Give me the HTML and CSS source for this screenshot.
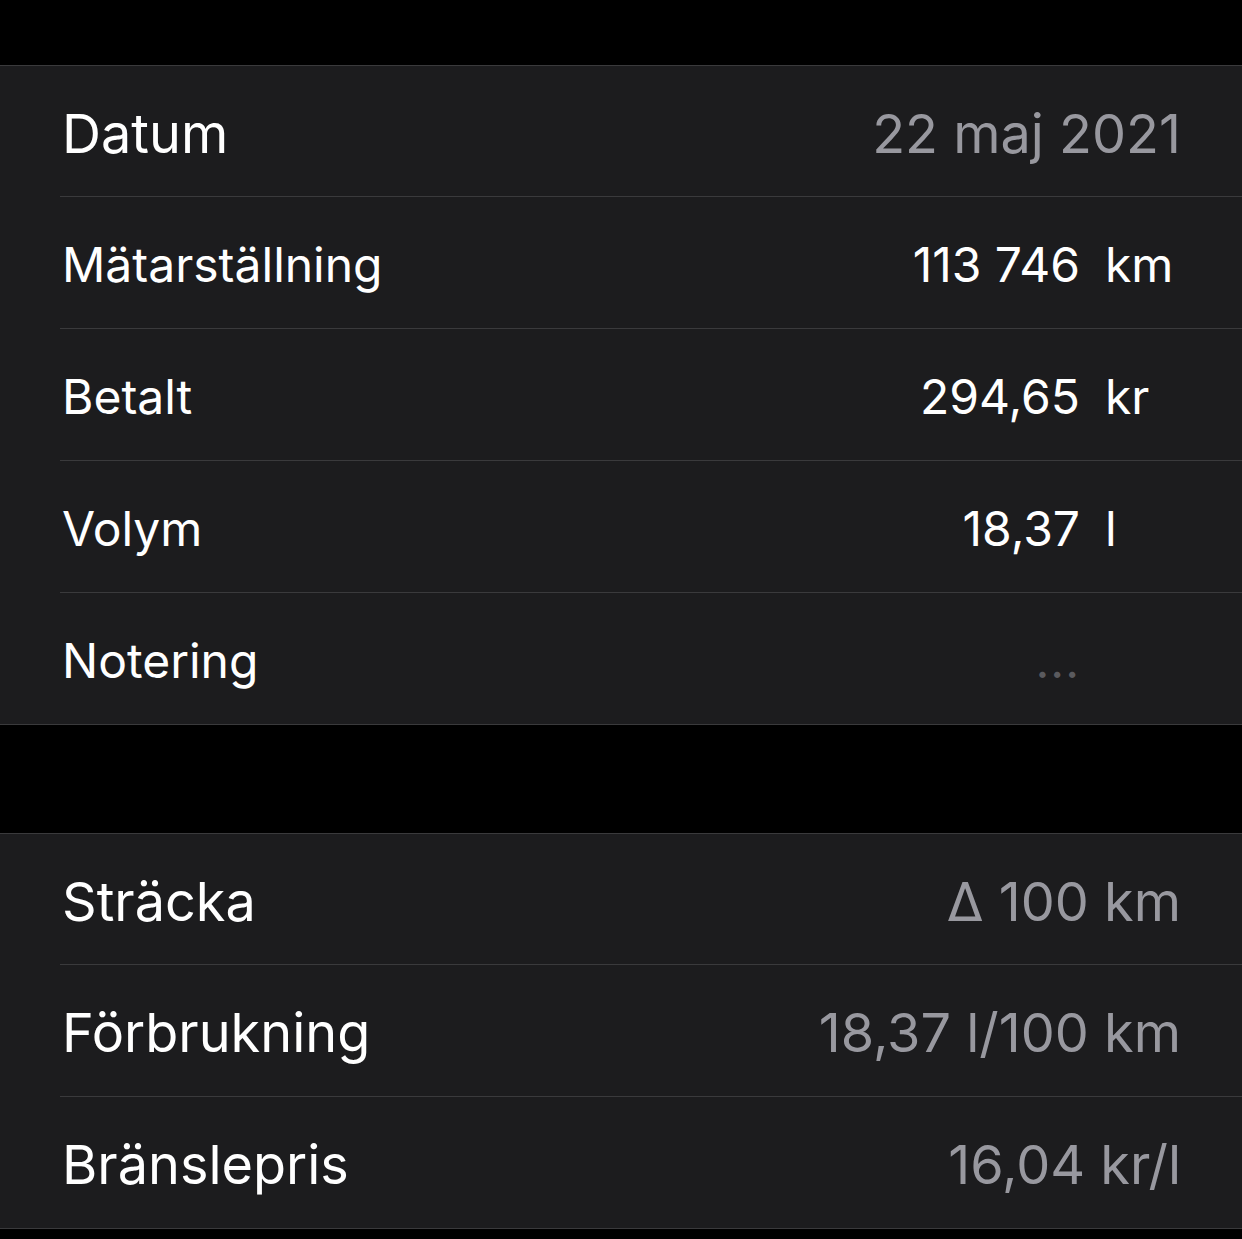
FILE: index.html
```html
<!DOCTYPE html>
<html lang="sv">
<head>
    <meta charset="UTF-8">
    <title>Tankning</title>
    <link rel="stylesheet" href="styles.css">
</head>
<body>
    <!-- Inmatade värden -->
    <div class="group">
        <div class="row">
            <span class="label">Datum</span>
            <span class="value muted">22 maj 2021</span>
        </div>
        <div class="row input">
            <span class="label">Mätarställning</span>
            <span class="field">
                <span class="num">113 746</span>
                <span class="unit">km</span>
            </span>
        </div>
        <div class="row input">
            <span class="label">Betalt</span>
            <span class="field">
                <span class="num">294,65</span>
                <span class="unit">kr</span>
            </span>
        </div>
        <div class="row input">
            <span class="label">Volym</span>
            <span class="field">
                <span class="num">18,37</span>
                <span class="unit">l</span>
            </span>
        </div>
        <div class="row input">
            <span class="label">Notering</span>
            <span class="field">
                <span class="num placeholder">...</span>
                <span class="unit"></span>
            </span>
        </div>
    </div>

    <!-- Beräknade värden -->
    <div class="group">
        <div class="row">
            <span class="label">Sträcka</span>
            <span class="value muted">Δ 100 km</span>
        </div>
        <div class="row">
            <span class="label">Förbrukning</span>
            <span class="value muted">18,37 l/100 km</span>
        </div>
        <div class="row">
            <span class="label">Bränslepris</span>
            <span class="value muted">16,04 kr/l</span>
        </div>
    </div>
</body>
</html>
```

FILE: styles.css
```css
body {
    margin: 0;
    padding: 65px 0 0;
    background-color: #000;
    color: #fff;
    font-family: Inter, "Noto Sans", sans-serif;
    font-size: 54px;
    -webkit-font-smoothing: antialiased;
}

.group {
    background-color: #1c1c1e;
    border-top: 1px solid #3a3a3c;
    border-bottom: 1px solid #3a3a3c;
}

.group + .group {
    margin-top: 108px;
}

.row {
    display: flex;
    align-items: center;
    justify-content: space-between;
    box-sizing: border-box;
    height: 132px;
    margin-left: 60px;
    padding-right: 61px;
    padding-top: 4px;
    border-bottom: 1px solid #3a3a3c;
}

.row:first-child {
    height: 131px;
}

.row:last-child {
    border-bottom: none;
    height: 131px;
}

/* editable rows use the smaller body size */
.row.input {
    font-size: 48px;
}

.label {
    padding-left: 2px;
}

.muted {
    color: #98989f;
}

.field {
    display: flex;
    align-items: baseline;
}

.num {
    text-align: right;
}

.unit {
    width: 76px;
    margin-left: 25px;
}

.placeholder {
    color: #5a5a5e;
    letter-spacing: 1px;
}
```
